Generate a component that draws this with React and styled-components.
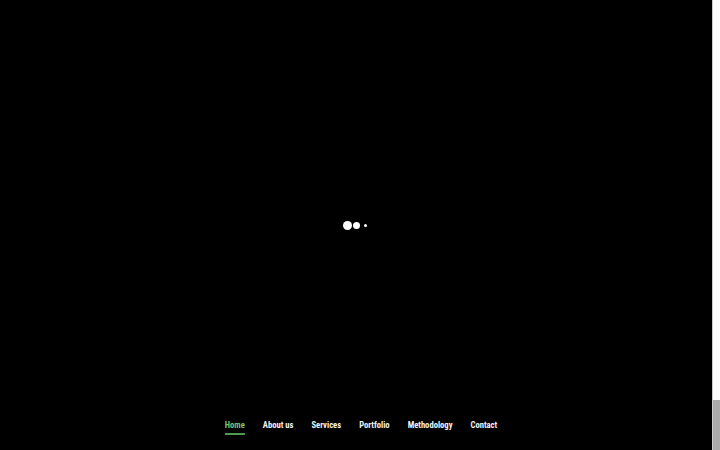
import React from "react";
import styled, { createGlobalStyle } from "styled-components";

const Global = createGlobalStyle`
  html, body { margin: 0; padding: 0; background: #000; overflow: hidden; }
  #root { height: 450px; }
`;

const Screen = styled.div`
  display: flex;
  width: 720px;
  height: 450px;
  background: #000;
`;

const Main = styled.main`
  flex: 1;
  display: grid;
  grid-template-areas: "stack";
  height: 100%;
`;

const LoaderLayer = styled.div`
  grid-area: stack;
  display: flex;
  align-items: center;
  justify-content: center;
  padding-right: 2px;
`;

const Dot = styled.span`
  display: block;
  width: ${(p) => p.$size}px;
  height: ${(p) => p.$size}px;
  margin-left: ${(p) => p.$space}px;
  border-radius: 50%;
  background: #fff;
`;

const NavLayer = styled.nav`
  grid-area: stack;
  align-self: end;
  display: flex;
  justify-content: center;
  gap: 18px;
  padding: 0 0 15px 10px;
`;

const NavLink = styled.a`
  font-family: Roboto, "Liberation Sans", sans-serif;
  font-stretch: condensed;
  font-weight: 700;
  font-size: 8.6px;
  line-height: 11px;
  color: ${(p) => (p.$active ? "#72c472" : "#f2f2f2")};
  text-decoration: none;
  padding-bottom: 2px;
  border-bottom: 2px solid ${(p) => (p.$active ? "#4f9a50" : "transparent")};
`;

const ScrollTrack = styled.div`
  width: 8px;
  height: 100%;
  background: #fff;
  display: flex;
  flex-direction: column;
  justify-content: flex-end;
  border-left: 1px solid #ccc;
  box-sizing: border-box;
`;

const ScrollThumb = styled.div`
  height: 50px;
  background: #ababab;
`;

const links = ["Home", "About us", "Services", "Portfolio", "Methodology", "Contact"];

export default function App() {
  return (
    <>
      <Global />
      <Screen>
        <Main>
          <LoaderLayer>
            <Dot $size={9} $space={0} />
            <Dot $size={7} $space={1} />
            <Dot $size={3} $space={4} />
          </LoaderLayer>
          <NavLayer>
            {links.map((l, i) => (
              <NavLink key={l} href="#" $active={i === 0}>
                {l}
              </NavLink>
            ))}
          </NavLayer>
        </Main>
        <ScrollTrack>
          <ScrollThumb />
        </ScrollTrack>
      </Screen>
    </>
  );
}
